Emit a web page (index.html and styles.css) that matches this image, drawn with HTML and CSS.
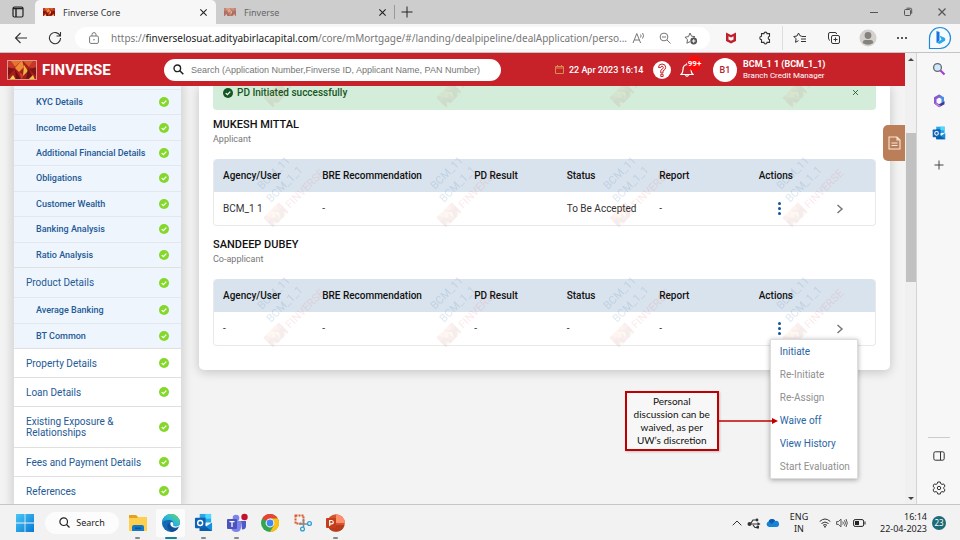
FILE: index.html
```html
<!DOCTYPE html>
<html lang="en">
<head>
<meta charset="utf-8">
<title>Finverse Core</title>
<link rel="stylesheet" href="styles.css">
</head>
<body>
<svg class="defs" aria-hidden="true">
  <symbol id="logo" viewBox="0 0 30 20" preserveAspectRatio="none">
    <path fill="#a81c1c" d="M0 0h30v20H0z"/>
    <path fill="#e8742c" d="M3 0h12L8 7z"/><path fill="#dc5a2a" d="M15 0h12l-5 7z"/>
    <path fill="#c9352a" d="M0 0h3l5 7-8 5zM27 0h3v12l-8-5z"/>
    <path fill="#7d1417" d="M0 7l8 2-8 8zM30 7l-8 2 8 8z"/>
    <path fill="#ef8a38" d="M8 8l7-8 2 7-5 5z"/><path fill="#e8b83c" d="M17 5l4 6-5 5z"/>
    <path fill="#f0d545" d="M2 20l4-5 3 5z"/>
    <path fill="#6f1014" d="M8 9l6 11H9zM21 8l4 8-6 4z"/><path fill="#f0c63a" d="M21 20l5-5 2 5z"/>
    <path fill="#d6402a" d="M12 12l4 3-1 5z"/>
  </symbol>
  <symbol id="check" viewBox="0 0 10 10"><circle cx="5" cy="5" r="5" fill="currentColor"/><path d="M2.7 5.1l1.7 1.6 2.9-3.1" fill="none" stroke="#fff" stroke-width="1.3"/></symbol>
  <symbol id="close" viewBox="0 0 10 10"><path d="M1.5 1.5l7 7M8.500 1.5l-7 7" fill="none" stroke="currentColor" stroke-width="1.2"/></symbol>
  <symbol id="outlook" viewBox="0 0 20 20"><path fill="#28a8ea" d="M6 1h12v9H6z"/><path fill="#50d9ff" d="M12 1h6v5h-6z"/><path fill="#0f6cbd" d="M6 5h6v6H6z"/><path fill="#1490df" d="M6 10l7 4 6-4v9H6z"/><path fill="#0b5ca8" d="M6 10l13 9H6z"/><rect x="1" y="5" width="11" height="11" rx="1" fill="#0f63b5"/><circle cx="6.5" cy="10.500" r="2.600" fill="none" stroke="#fff" stroke-width="1.500"/></symbol>
</svg>

<header class="tabs">
  <button class="tab-menu" aria-label="Tab actions"><svg width="12" height="12" viewBox="0 0 12 12"><rect x="1" y="1" width="10" height="10" rx="1.500" fill="none" stroke="#222" stroke-width="1.200"/><path d="M1 2.500h10M4 3v8" stroke="#222" stroke-width="1.400"/></svg></button>
  <div class="tab active"><svg width="12" height="8"><use href="#logo"/></svg><span>Finverse Core</span><button aria-label="Close Finverse Core"><svg width="9" height="9"><use href="#close"/></svg></button></div>
  <div class="tab"><svg class="faded" width="12" height="8"><use href="#logo"/></svg><span>Finverse</span><button aria-label="Close Finverse"><svg width="9" height="9"><use href="#close"/></svg></button></div>
  <button class="new-tab" aria-label="New tab"><svg width="12" height="12" viewBox="0 0 12 12"><path d="M6 .5v11M.5 6h11" stroke="#222"/></svg></button>
  <div class="window-buttons">
    <button aria-label="Minimize"><svg width="10" height="10" viewBox="0 0 10 10"><path d="M1 5.500h8" stroke="#555"/></svg></button>
    <button aria-label="Restore"><svg width="10" height="10" viewBox="0 0 10 10"><rect x="1.500" y="2.500" width="6" height="6" rx="1" fill="none" stroke="#555"/><path d="M3.500 1.200h3.700q1.500 0 1.500 1.500v4" fill="none" stroke="#555"/></svg></button>
    <button aria-label="Close"><svg width="10" height="10"><use href="#close"/></svg></button>
  </div>
</header>

<div class="toolbar">
  <button aria-label="Back"><svg width="14" height="12" viewBox="0 0 14 12"><path d="M13 6H1.500M6.500 1l-5 5 5 5" fill="none" stroke="#333" stroke-width="1.100"/></svg></button>
  <button aria-label="Reload"><svg width="14" height="14" viewBox="0 0 14 14"><path d="M12.200 5A5.600 5.600 0 1 0 12.600 7M12.500 1v4H8.500" fill="none" stroke="#333" stroke-width="1.100"/></svg></button>
  <div class="address">
    <svg width="10" height="12" viewBox="0 0 10 12"><rect x=".6" y="4" width="8.800" height="7.400" rx="1.200" fill="none" stroke="#777"/><path d="M3 4V2.600a2 2 0 0 1 4 0V4" fill="none" stroke="#777"/><circle cx="5" cy="7.700" r=".8" fill="#777"/></svg>
    <span class="url">https://<b>finverselosuat.adityabirlacapital.com</b>/core/mMortgage/#/landing/dealpipeline/dealApplication/perso...</span>
    <button aria-label="Read aloud"><svg width="14" height="12" viewBox="0 0 14 12"><path d="M1 11L4.800 1.500 8.600 11M2.300 8h5M8.500 2.500q1.200 1.200 0 3M10.500 1q2.200 2.700 0 5.500" fill="none" stroke="#777"/></svg></button>
    <button aria-label="Zoom out"><svg width="12" height="12" viewBox="0 0 12 12"><circle cx="5" cy="5" r="3.900" fill="none" stroke="#777"/><path d="M3 5h4M8 8l3.500 3.500" stroke="#777"/></svg></button>
    <button aria-label="Add favourite"><svg width="14" height="13" viewBox="0 0 14 13"><path d="M6 1l1.500 3.200 3.500.4-2.500 2.400M6 9.600L2.900 11.200l.6-3.500L1 5.200l3.500-.6L6 1" fill="none" stroke="#666"/><circle cx="9.700" cy="9" r="3.400" fill="#555"/><path d="M9.700 7.200v3.600M7.900 9h3.600" stroke="#fff"/></svg></button>
  </div>
  <div class="tools">
    <button aria-label="McAfee"><svg width="12" height="12" viewBox="0 0 12 12"><path d="M1 .5l5 2.500 5-2.500v8.500l-5 2.500-5-2.500z" fill="#c0202c"/><path d="M3.500 4.200L6 5.500l2.500-1.300v3.300L6 8.800 3.500 7.500z" fill="#f7f7f7"/></svg></button>
    <button aria-label="Extensions"><svg width="14" height="14" viewBox="0 0 14 14"><path d="M3.500 2.600H6a1.500 1.500 0 0 1 3 0h2.500v2.700a1.700 1.700 0 0 0 0 3.300v2.800H9a1.500 1.500 0 0 1-3 0H3.500V8.700a1.700 1.700 0 0 1 0-3.400z" fill="none" stroke="#333" stroke-width="1.100"/></svg></button>
    <button class="ruled" aria-label="Favourites"><svg width="14" height="12" viewBox="0 0 14 12"><path d="M8.500 4L7 3.800 5.500 1 4 4l-3.200.5 2.300 2.300-.6 3.500 3-1.600M8.500 4.500H13M8 7h5M8 9.500h5" fill="none" stroke="#333"/></svg></button>
    <button aria-label="Collections"><svg width="14" height="14" viewBox="0 0 14 14"><rect x="4.500" y="4.500" width="8" height="8" rx="1.500" fill="none" stroke="#333"/><path d="M8.500 6.500v4M6.500 8.500h4M3 9.500Q1.500 9 1.500 7V3q0-1.500 1.500-1.500h5q1.500 0 1.700 1.500" fill="none" stroke="#333"/></svg></button>
    <button aria-label="Profile"><svg width="18" height="18" viewBox="0 0 18 18"><circle cx="9" cy="9" r="8.500" fill="#d3d0cd"/><circle cx="9" cy="6.500" r="3.400" fill="#85827e"/><path d="M3.800 14q0-3 2.500-3h5.400q2.500 0 2.500 3Q9 17.500 3.800 14z" fill="#85827e"/></svg></button>
    <button aria-label="More"><svg width="12" height="4" viewBox="0 0 12 4"><circle cx="2" cy="2" r="1" fill="#222"/><circle cx="6" cy="2" r="1" fill="#222"/><circle cx="10" cy="2" r="1" fill="#222"/></svg></button>
    <button class="bing" aria-label="Bing"><svg width="24" height="24" viewBox="0 0 24 24"><path d="M1.500 22.500V12A10.500 10.500 0 1 1 12 22.500z" fill="#f4fbff" stroke="#2388dc" stroke-width="1.200"/><path d="M8.500 5l3 1v8.500L8.500 17z" fill="#1c6fe0"/><path d="M11.500 9.500l5 2.200q1.500 1 .5 3l-5.500 3.300-3-1.500 5-2.700z" fill="#2aa8e8"/></svg></button>
  </div>
</div>

<div class="middle">
  <div class="app">
    <header class="app-bar">
      <div class="brand"><svg width="30" height="20"><use href="#logo"/><rect x=".5" y=".5" width="29" height="19" fill="none" stroke="#d99a8a"/></svg><strong>FINVERSE</strong></div>
      <label class="search"><svg width="11" height="11" viewBox="0 0 11 11"><circle cx="4.300" cy="4.300" r="3.300" fill="none" stroke="#222" stroke-width="1.400"/><path d="M6.800 6.800l3.500 3.500" stroke="#222" stroke-width="1.600"/></svg><input type="text" aria-label="Search" placeholder="Search (Application Number,Finverse ID, Applicant Name, PAN Number)"></label>
      <div class="date"><svg width="9" height="9" viewBox="0 0 9 9"><path d="M.5 1.500h8v7h-8zM.5 3h8M2.500 0v2M6.500 0v2" fill="none" stroke="#d98a4e"/></svg><time>22 Apr 2023 16:14</time></div>
      <button class="help" aria-label="Help"><svg width="18" height="18" viewBox="0 0 18 18"><circle cx="9" cy="9" r="9" fill="#fff"/><path d="M5.500 6.500Q5.500 3 9 3t3.700 3.300Q12.700 8.500 10 10v2H7.800V9.200Q10.300 8 10.300 6.500 10.200 5.200 9 5.200T7.700 6.600zM7.800 13.300h2.300v2.200H7.800z" fill="none" stroke="#c7222a"/></svg></button>
      <button class="bell" aria-label="Notifications"><svg width="14" height="16" viewBox="0 0 14 16"><path d="M1 12.500Q3 11 3 7.500 3 3 7 2.500q4 .5 4 5 0 3.500 2 5zM5.500 13q1.500 2.500 3 0M7 1v1.500" fill="none" stroke="#fff" stroke-width="1.200"/></svg><span class="badge">99+</span></button>
      <div class="user"><span class="initials">B1</span><div><strong>BCM_1 1 (BCM_1_1)</strong><small>Branch Credit Manager</small></div></div>
    </header>
    <div class="pane">
      <nav class="side" aria-label="Deal sections">
        <ul class="sub seven">
          <li><a href="#">KYC Details</a><svg><use href="#check"/></svg></li>
          <li><a href="#">Income Details</a><svg><use href="#check"/></svg></li>
          <li><a href="#">Additional Financial Details</a><svg><use href="#check"/></svg></li>
          <li><a href="#">Obligations</a><svg><use href="#check"/></svg></li>
          <li><a href="#">Customer Wealth</a><svg><use href="#check"/></svg></li>
          <li><a href="#">Banking Analysis</a><svg><use href="#check"/></svg></li>
          <li><a href="#">Ratio Analysis</a><svg><use href="#check"/></svg></li>
        </ul>
        <ul class="top open"><li><a href="#">Product Details</a><svg><use href="#check"/></svg></li></ul>
        <ul class="sub two">
          <li><a href="#">Average Banking</a><svg><use href="#check"/></svg></li>
          <li><a href="#">BT Common</a><svg><use href="#check"/></svg></li>
        </ul>
        <ul class="top">
          <li><a href="#">Property Details</a><svg><use href="#check"/></svg></li>
          <li><a href="#">Loan Details</a><svg><use href="#check"/></svg></li>
          <li class="tall"><a href="#">Existing Exposure &amp;<br>Relationships</a><svg><use href="#check"/></svg></li>
          <li><a href="#">Fees and Payment Details</a><svg><use href="#check"/></svg></li>
          <li><a href="#">References</a><svg><use href="#check"/></svg></li>
        </ul>
      </nav>
      <main class="card">
        <div class="alert" role="status"><svg width="10" height="10"><use href="#check"/></svg><span>PD Initiated successfully</span><button aria-label="Dismiss"><svg width="7" height="7"><use href="#close"/></svg></button></div>
        <section>
          <h2>MUKESH MITTAL</h2>
          <p>Applicant</p>
          <table>
            <colgroup><col class="c-user"><col class="c-bre"><col class="c-mid"><col class="c-mid"><col class="c-mid"><col class="c-act"><col class="c-act"></colgroup>
            <thead><tr><th>Agency/User</th><th>BRE Recommendation</th><th>PD Result</th><th>Status</th><th>Report</th><th class="mid">Actions</th><th></th></tr></thead>
            <tbody><tr><td>BCM_1 1</td><td>-</td><td></td><td>To Be Accepted</td><td>-</td>
              <td class="mid act"><button class="dots" aria-label="Actions"><i></i><i></i><i></i></button></td>
              <td class="mid go"><button aria-label="Open"><svg width="8" height="12" viewBox="0 0 8 12"><path d="M1.500 2l4.500 4-4.500 4" fill="none" stroke="#777" stroke-width="1.500"/></svg></button></td></tr></tbody>
          </table>
        </section>
        <section>
          <h2>SANDEEP DUBEY</h2>
          <p>Co-applicant</p>
          <table>
            <colgroup><col class="c-user"><col class="c-bre"><col class="c-mid"><col class="c-mid"><col class="c-mid"><col class="c-act"><col class="c-act"></colgroup>
            <thead><tr><th>Agency/User</th><th>BRE Recommendation</th><th>PD Result</th><th>Status</th><th>Report</th><th class="mid">Actions</th><th></th></tr></thead>
            <tbody><tr><td>-</td><td>-</td><td>-</td><td>-</td><td>-</td>
              <td class="mid act"><div class="menu-anchor"><button class="dots" aria-label="Actions"><i></i><i></i><i></i></button>
                <div class="menu">
                  <button>Initiate</button>
                  <button disabled>Re-Initiate</button>
                  <button disabled>Re-Assign</button>
                  <button>Waive off</button>
                  <button>View History</button>
                  <button disabled>Start Evaluation</button>
                  <div class="callout">Personal discussion can be waived, as per UW’s discretion
                    <svg class="arrow" width="60" height="8" viewBox="0 0 60 8"><path d="M0 4h55" stroke="#c00000" stroke-width="1.300"/><path d="M54 1l6 3-6 3z" fill="#c00000"/></svg>
                  </div>
                </div></div></td>
              <td class="mid go"><button aria-label="Open"><svg width="8" height="12" viewBox="0 0 8 12"><path d="M1.500 2l4.500 4-4.500 4" fill="none" stroke="#777" stroke-width="1.500"/></svg></button></td></tr></tbody>
          </table>
        </section>
        <svg class="watermark" aria-hidden="true">
          <pattern id="wm" y="-60" width="173" height="120" patternUnits="userSpaceOnUse">
            <g fill="#2f6fa8" opacity=".16"><text transform="translate(63 44) rotate(-45)">BCM_11</text><text transform="translate(72 57) rotate(-45)">BCM_1_1</text></g>
            <text fill="#e02020" opacity=".1" transform="translate(91 63) rotate(-45)">FINVERSE</text>
            <g opacity=".08" transform="translate(77 69) rotate(-45)"><use href="#logo" x="-11" y="-7" width="22" height="14"/></g>
          </pattern>
          <rect width="100%" height="100%" fill="url(#wm)"/>
        </svg>
      </main>
      <button class="note-tab" aria-label="Notes"><svg width="13" height="14" viewBox="0 0 13 14"><path d="M1 1h8l3 3v9H1zM9 1v3h3M3.500 7h6M3.500 9.500h6" fill="none" stroke="#f6e6da" stroke-width="1.100"/></svg></button>
    </div>
  </div>
  <div class="scroll" aria-hidden="true"><i class="up"></i><span class="track"><i class="thumb"></i></span><i class="down"></i></div>
  <aside class="edge-bar">
    <button aria-label="Search"><svg width="14" height="14" viewBox="0 0 14 14"><circle cx="5.500" cy="5.500" r="3.900" fill="#cfe9f8" stroke="#667" stroke-width="1.300"/><path d="M8.500 8.500l4 4" stroke="#a43cd8" stroke-width="2.200"/></svg></button>
    <button aria-label="Microsoft 365"><svg width="14" height="14" viewBox="0 0 14 14"><path d="M7 .5l5 2.800v4L9.500 9V5L7 3.500z" fill="#4a8fe0"/><path d="M7 .5L2 3.300v6L4.500 11V5.200L9.500 2z" fill="#8a5bd0"/><path d="M2 9.300l5 4 5.500-3V7L7 10.300l-2.500-1.500z" fill="#3c3a9e"/><path d="M2 9.300L7 13.300l2-1.200-4.500-3z" fill="#c07be0"/></svg></button>
    <button aria-label="Outlook"><svg width="14" height="14"><use href="#outlook"/></svg></button>
    <button aria-label="Add"><svg width="10" height="10" viewBox="0 0 10 10"><path d="M5 .5v9M.5 5h9" stroke="#444"/></svg></button>
    <hr>
    <button aria-label="Hide sidebar"><svg width="12" height="10" viewBox="0 0 12 10"><rect x=".8" y=".8" width="10.400" height="8.400" rx="1.500" fill="none" stroke="#333"/><path d="M7.500 1v8" stroke="#333"/></svg></button>
    <button aria-label="Settings"><svg width="14" height="14" viewBox="0 0 14 14"><path d="M5.700 1h2.600l.4 1.700 1.300.7 1.700-.5L13 5.100l-1.200 1.200v1.400L13 8.900l-1.300 2.200-1.700-.5-1.300.7L8.300 13H5.700l-.4-1.700-1.300-.7-1.700.5L1 8.900l1.200-1.200V6.300L1 5.100l1.300-2.200 1.700.5 1.300-.7z" fill="none" stroke="#333"/><circle cx="7" cy="7" r="1.700" fill="none" stroke="#333"/></svg></button>
  </aside>
</div>

<footer class="taskbar">
  <button class="start" aria-label="Start"><svg width="18" height="18" viewBox="0 0 18 18"><defs><linearGradient id="win" x2="1" y2="1"><stop stop-color="#48c8f8"/><stop offset="1" stop-color="#0878d4"/></linearGradient></defs><path fill="url(#win)" d="M0 0h8.600v8.600H0zM9.400 0H18v8.600H9.400zM0 9.400h8.600V18H0zM9.400 9.400H18V18H9.400z"/></svg></button>
  <button class="task-search"><svg width="11" height="11" viewBox="0 0 11 11"><circle cx="4.700" cy="4.700" r="3.800" fill="none" stroke="#222" stroke-width="1.200"/><path d="M7.500 7.500l3 3" stroke="#222" stroke-width="1.300"/></svg>Search</button>
  <div class="apps">
    <button class="run" aria-label="File Explorer"><svg width="18" height="18" viewBox="0 0 18 18"><path fill="#e3a21a" d="M0 1h7l2 2v4H0z"/><path fill="#ffd04e" d="M0 4h8l1-1h9v14H0z"/><path fill="#1478c8" d="M3 17v-4q0-2 2-2h8q2 0 2 2v4z"/><path fill="#0c5590" d="M6 13.500h6v1.500H6z"/></svg></button>
    <button class="run current" aria-label="Edge"><svg width="18" height="18" viewBox="0 0 18 18"><defs><linearGradient id="edge" y1="1" x2="1" y2="0"><stop stop-color="#1286d8"/><stop offset=".5" stop-color="#29b9d8"/><stop offset="1" stop-color="#6fdc58"/></linearGradient></defs><circle cx="9" cy="9" r="9" fill="#1469b4"/><path fill="url(#edge)" d="M0 9A9 9 0 0 1 18 8.500q0 4-4 4-3.500 0-3-1.500 1.500-4-3-5Q2 5.500 0 9z"/><path fill="#0f4f96" d="M5.500 10.500q-1 4.500 4 7.400Q14 18 16.500 13.500q-4 2-6.500 0-1.600-1.500-1-3.500-1.800-1.500-3.500.5z"/><path fill="#fbfbfb" d="M8.500 8.500q-1 4 3.500 5 3 .5 5-1l1-1v-1q-2 2.500-5.500 1.800-2.200-.6-1.300-1.800.5-2-1-2.500z"/></svg></button>
    <button class="run" aria-label="Outlook"><svg width="19" height="19"><use href="#outlook"/></svg></button>
    <button class="run" aria-label="Teams"><svg width="22" height="20" viewBox="0 0 22 20"><circle cx="10" cy="5" r="3.300" fill="#7b83eb"/><path fill="#7b83eb" d="M6 8h9v6q0 5-5 5-4 0-5-4z"/><path fill="#5059c9" d="M15 8h5v5q0 3.500-4 3.500z"/><rect x="1" y="6" width="10" height="10" rx="1" fill="#4b53bc"/><path d="M3.500 8.700h5M6 8.700V14" stroke="#fff" stroke-width="1.300"/><circle cx="18.500" cy="4" r="3.200" fill="#c50f2e"/></svg></button>
    <button aria-label="Chrome"><svg width="18" height="18" viewBox="0 0 18 18"><circle cx="9" cy="9" r="9" fill="#33a552"/><path fill="#ea4335" d="M9 9L1.200 4.500A9 9 0 0 1 16.800 4.500H9z"/><path fill="#fbc116" d="M9 4.500h7.800A9 9 0 0 1 9 18l4-7z"/><circle cx="9" cy="9" r="4.400" fill="#fff"/><circle cx="9" cy="9" r="3.400" fill="#4285f4"/></svg></button>
    <button aria-label="Snipping Tool"><svg width="18" height="18" viewBox="0 0 18 18"><rect x="1.500" y="1.500" width="8" height="8" fill="none" stroke="#dc5a32" stroke-width="2" stroke-dasharray="2 1"/><path d="M9.500 5v8M5 10h9" stroke="#888" stroke-width="1.500"/><circle cx="8.500" cy="15" r="1.900" fill="none" stroke="#28a0d8" stroke-width="1.300"/><circle cx="15.500" cy="9.500" r="1.900" fill="none" stroke="#28a0d8" stroke-width="1.300"/></svg></button>
    <button class="run" aria-label="PowerPoint"><svg width="19" height="18" viewBox="0 0 19 18"><circle cx="10" cy="9" r="8.800" fill="#d35230"/><path fill="#ff8f6b" d="M10 .2A8.800 8.800 0 0 1 18.800 9H10z"/><path fill="#b83b1d" d="M1.500 11h17A8.800 8.800 0 0 1 2 12.500z"/><rect y="4" width="10" height="10" rx="1" fill="#c43e1c"/><path d="M3.700 12V6.500h1.800q1.800.1 1.800 1.700T5.500 9.900H3.700" fill="none" stroke="#fff" stroke-width="1.200"/></svg></button>
  </div>
  <div class="tray">
    <button aria-label="Show hidden icons"><svg width="10" height="6" viewBox="0 0 10 6"><path d="M.7 5.300L5 1l4.300 4.300" fill="none" stroke="#333"/></svg></button>
    <svg width="14" height="12" viewBox="0 0 14 12"><path d="M2 7h9M4 6l2-3h4M6 8l2 2.500h3" fill="none" stroke="#333" stroke-width="1.200"/><circle cx="2.500" cy="7" r="2" fill="#333"/><path d="M10.500 5l3 2-3 2z" fill="#333"/><circle cx="10" cy="3" r="1.400" fill="#333"/><path d="M9.500 9h2.500v2.500H9.500z" fill="#333"/></svg>
    <svg width="13" height="9" viewBox="0 0 13 9"><path d="M3 9a2.800 2.800 0 0 1-.3-5.500 3.700 3.700 0 0 1 6.800-.6A3 3 0 0 1 10.500 9z" fill="#1584d8"/><path d="M2.500 3.500a3.700 3.700 0 0 1 6.500-1L6 6z" fill="#0b5cb0"/></svg>
    <span class="lang">ENG<br>IN</span>
    <svg width="12" height="10" viewBox="0 0 12 10"><path d="M.7 3.500q5.300-5 10.600 0M2.500 5.500q3.500-3 7 0M4 7.300q2-1.500 4 0" fill="none" stroke="#333"/><circle cx="6" cy="8.700" r=".9" fill="#333"/></svg>
    <svg width="12" height="10" viewBox="0 0 12 10"><path d="M.6 3.600h1.700L5 1.200v7.600L2.300 6.400H.6zM6.800 3.500q1 1.500 0 3M8.500 2.200q1.800 2.800 0 5.600M10 1q2.600 4 0 8" fill="none" stroke="#444" stroke-width=".9"/></svg>
    <svg width="13" height="8" viewBox="0 0 13 8"><rect x=".6" y=".6" width="10" height="6.800" rx="1.500" fill="none" stroke="#222"/><path d="M2 2h4v4H2zM11.500 2.500h1v3h-1z" fill="#222"/></svg>
    <span class="clock">16:14<br>22-04-2023</span>
    <span class="count">23</span>
  </div>
</footer>
</body>
</html>
```
FILE: styles.css
```css
* { box-sizing: border-box; }
body {
  margin: 0;
  height: 100vh;
  display: flex;
  flex-direction: column;
  overflow: hidden;
  background: #f7f7f7;
  font-family: Roboto, "Liberation Sans", sans-serif;
  font-size: 10px;
  color: #222;
}
button {
  border: 0;
  padding: 0;
  background: none;
  font: inherit;
  color: inherit;
  display: flex;
  align-items: center;
  justify-content: center;
}
svg { display: block; flex: none; }
ul { list-style: none; margin: 0; padding: 0; }
.defs { position: absolute; width: 0; height: 0; }

/* Browser window */
.tabs, .toolbar, .taskbar { font-family: "Noto Sans", "Open Sans", sans-serif; flex: none; }
.tabs { display: flex; height: 24px; background: #cdcdcd; color: #333; }
.tab-menu { width: 35px; }
.tab { display: flex; align-items: center; gap: 8px; width: 181px; padding: 0 8px; font-size: 9px; color: #666; }
.tab span { flex: 1; }
.tab.active { background: #f7f7f7; color: #333; border-radius: 5px 5px 0 0; }
.tab button { color: #222; }
.faded { opacity: .5; }
.tab + .tab { padding-right: 10px; }
.new-tab { width: 24px; height: 14px; margin: 5px 0 0 -3px; border-left: 1px solid #999; }
.window-buttons { display: flex; margin-left: auto; padding-right: 1px; color: #555; }
.window-buttons button { width: 34px; }

.toolbar { display: flex; align-items: center; height: 29px; padding-left: 4px; background: #f7f7f7; border-bottom: 1px solid #c4c4c4; }
.toolbar > button { width: 34px; height: 24px; }
.address { flex: 1; min-width: 0; display: flex; align-items: center; height: 22px; padding: 0 6px 0 14px; margin-left: 3px; border-radius: 11px; background: #fff; }
.url { flex: 1; min-width: 0; white-space: nowrap; padding-left: 12px; font-size: 10px; color: #777; }
.url b { font-weight: 400; color: #222; }
.address button { width: 26px; }
.tools { display: flex; align-items: center; padding-left: 4px; }
.tools button { width: 34px; height: 24px; }
.tools .ruled { border-left: 1px solid #ddd; width: 35px; }
.tools .bing { width: 41px; height: 28px; }

.middle { flex: 1; min-height: 0; display: grid; grid-template-columns: 1fr 12px 43px; }
.app { display: flex; flex-direction: column; min-width: 0; min-height: 0; background: #f3f3f3; }

/* Application header */
.app-bar { flex: none; display: flex; align-items: center; height: 33px; background: #c7222a; color: #fff; z-index: 2; }
.brand { display: flex; align-items: center; gap: 5px; width: 164px; padding-left: 7px; }
.brand strong { font-size: 15px; font-weight: 700; }
.search { display: flex; align-items: center; gap: 7px; width: 337px; height: 22px; padding-left: 9px; border-radius: 11px; background: #fff; overflow: hidden; }
.search input { flex: 1; min-width: 0; padding: 0; border: 0; outline: 0; background: none; font: 9px "Liberation Sans", Arial, sans-serif; }
.search input::placeholder { color: #757575; }
.date { display: flex; align-items: center; gap: 5px; width: 98px; margin-left: 54px; font-size: 9px; font-weight: 500; white-space: nowrap; }
.bell { position: relative; width: 14px; margin-left: 9px; }
.badge { position: absolute; left: 7px; top: -6px; width: 15px; height: 15px; border-radius: 8px; background: #ff0a0a; font-size: 8px; font-weight: 700; line-height: 15px; text-align: center; }
.user { display: flex; align-items: center; gap: 6px; margin-left: 19px; white-space: nowrap; }
.initials { width: 24px; height: 24px; border-radius: 12px; background: #fff; color: #b5232a; font-size: 9px; font-weight: 500; line-height: 24px; text-align: center; }
.user strong, .user small { display: block; line-height: 12px; }
.user strong { font-size: 9px; font-weight: 700; }
.user small { font-size: 8px; }

/* Deal page */
.pane { position: relative; flex: 1; min-height: 0; overflow: hidden; display: flex; align-items: flex-start; gap: 18px; padding: 0 15px 0 14px; }
.side { flex: none; width: 167px; padding-top: 3px; background: #eef5fd; box-shadow: 0 0 9px 3px #0002; color: #245a96; }
.side li { display: flex; align-items: center; justify-content: space-between; padding: 0 12px; border-top: 1px solid #e3e8ee; }
.side a { color: inherit; text-decoration: none; }
.side li svg { width: 10px; height: 10px; color: #84d829; }
.sub { display: grid; font-size: 9px; font-weight: 500; }
.side .sub li { padding-left: 22px; }
.seven { height: 178px; grid-template-rows: repeat(7, 1fr); }
.two { height: 51px; grid-template-rows: repeat(2, 1fr); }
.top li { height: 29px; line-height: 11px; background: #fff; border-color: #e0e0e0; }
.top.open li { height: 30px; background: #eef5fd; }
.top .tall { height: 41px; }

.card { position: relative; flex: 1; min-width: 0; padding: 0 14px 24px; border-radius: 0 0 5px 5px; background: #fff; box-shadow: 0 2px 11px #0003; }
.alert { display: flex; align-items: center; gap: 4px; height: 24px; padding: 0 17px 11px 10px; border-radius: 0 0 4px 4px; background: #d4edda; color: #155724; font-weight: 500; }
.alert span { flex: 1; }
h2 { margin: 0; padding-top: 8px; font-size: 11px; line-height: 14px; font-weight: 500; color: #111; }
p { margin: 0; padding-bottom: 13px; font-size: 9px; line-height: 14px; color: #777; }
section + section { padding-top: 4px; }
table { width: 100%; table-layout: fixed; border-collapse: separate; border-spacing: 0; border: 1px solid #e9e9e9; border-top: 0; border-radius: 4px; }
.c-user { width: 15%; }
.c-bre { width: 23%; }
.c-mid { width: 14%; }
.c-act { width: 10%; }
th, td { padding: 0 0 0 9px; text-align: left; white-space: nowrap; }
th { height: 33px; background: #d9e3ed; font-weight: 500; color: #111; }
th:first-child { border-top-left-radius: 4px; }
th:last-child { border-top-right-radius: 4px; }
td { height: 33px; color: #333; }
.mid { padding: 0; text-align: center; }
.mid > button { margin: 0 auto; }
td.act { padding-left: 8px; }
td.go { padding-right: 4px; }
.dots { flex-direction: column; gap: 2px; width: 12px; height: 16px; }
.dots i { width: 3px; height: 3px; border-radius: 2px; background: #12539a; }
.menu-anchor { position: relative; display: flex; justify-content: center; z-index: 3; }
.menu { position: absolute; left: 19px; top: 18px; width: 88px; border: 1px solid #ddd; background: #fff; box-shadow: 0 1px 5px #0005; }
.menu button { justify-content: flex-start; width: 100%; height: 23px; padding-left: 9px; color: #2a65a5; white-space: nowrap; }
.menu button:disabled { color: #909090; }
.callout { position: absolute; left: -146px; top: 51px; width: 94px; padding: 2px 6px; border: 2px solid #c00000; background: #f7f7f7; font: 10px/13px Lato, sans-serif; color: #111; text-align: center; white-space: normal; box-shadow: 1px 1px 2px #0003; }
.arrow { position: absolute; left: 91px; top: 24px; }
.watermark { position: absolute; inset: 0; width: 100%; height: 100%; pointer-events: none; font-size: 11px; }
.note-tab { position: absolute; right: 0; top: 39px; width: 22px; height: 36px; border-radius: 5px 0 0 5px; background: #ba7f59; }

.scroll { display: flex; flex-direction: column; align-items: center; padding: 5px 0 4px; background: #f0f0f0; border-right: 1px solid #d4d4d4; }
.scroll .up, .scroll .down { border: 3px solid transparent; }
.scroll .up { border-bottom: 3px solid #444; border-top: 0; }
.scroll .down { border-top: 3px solid #444; border-bottom: 0; }
.track { flex: 1; width: 10px; margin-top: 5px; padding-top: 67px; }
.thumb { display: block; height: 41%; background: #c1c1c1; }

.edge-bar { display: flex; flex-direction: column; align-items: center; background: #f7f7f7; }
.edge-bar button { height: 32px; width: 32px; }
.edge-bar hr { width: 22px; margin: auto 0 2px; border: 0; border-top: 1px solid #ccc; }

/* Taskbar */
.taskbar { display: flex; align-items: center; height: 36px; padding: 0 14px 0 9px; background: #f2f2f2; border-top: 1px solid #c6c6c6; }
.start { width: 32px; height: 32px; }
.task-search { gap: 6px; width: 74px; height: 22px; margin-left: 4px; border-radius: 11px; background: #fcfcfc; font-size: 9px; }
.apps { display: flex; margin-left: 2px; }
.apps button { position: relative; width: 33px; height: 32px; border-radius: 4px; border: 2px solid transparent; background-clip: padding-box; }
.apps .current { background-color: #fbfbfb; }
.apps .run::after { content: ""; position: absolute; bottom: -2px; width: 5px; height: 2px; border-radius: 1px; background: #888; }
.apps .current::after { width: 12px; background: #1a7f93; }
.tray { display: flex; align-items: center; gap: 5px; margin-left: auto; font-size: 9px; line-height: 12px; }
.lang { width: 30px; text-align: center; }
.clock { width: 56px; text-align: right; white-space: nowrap; }
.count { width: 14px; height: 14px; border-radius: 7px; background: #1d6a78; color: #fff; font-size: 8px; line-height: 14px; text-align: center; }
```
